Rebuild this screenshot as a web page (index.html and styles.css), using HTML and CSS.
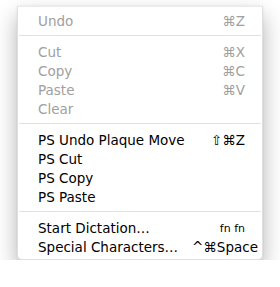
FILE: index.html
```html
<!DOCTYPE html>
<html lang="en">
<head>
  <meta charset="UTF-8">
  <title>Edit Menu</title>
  <link rel="stylesheet" href="styles.css">
</head>
<body>

  <!-- Edit menu -->
  <div class="menu">
    <div class="item disabled"><span>Undo</span><span class="key">⌘Z</span></div>
    <div class="sep"></div>
    <div class="item disabled"><span>Cut</span><span class="key">⌘X</span></div>
    <div class="item disabled"><span>Copy</span><span class="key">⌘C</span></div>
    <div class="item disabled"><span>Paste</span><span class="key">⌘V</span></div>
    <div class="item disabled"><span>Clear</span></div>
    <div class="sep"></div>
    <div class="item"><span>PS Undo Plaque Move</span><span class="key">⇧⌘Z</span></div>
    <div class="item"><span>PS Cut</span></div>
    <div class="item"><span>PS Copy</span></div>
    <div class="item"><span>PS Paste</span></div>
    <div class="sep"></div>
    <div class="item"><span>Start Dictation…</span><span class="key small">fn fn</span></div>
    <div class="item wide"><span>Special Characters…</span><span class="key">^⌘Space</span></div>
  </div>

</body>
</html>
```

FILE: styles.css
```css
* {
  margin: 0;
  padding: 0;
  box-sizing: border-box;
}

body {
  font-family: 'DejaVu Sans', sans-serif;
  background-color: #fff;
  color: #000;
}

.menu {
  width: 246px;
  margin: 6px 0 0 17px;
  padding: 4px 0 3px;
  background-color: #fff;
  border: 1px solid rgba(0, 0, 0, 0.12);
  border-top-color: rgba(0, 0, 0, 0.08);
  border-radius: 0 0 5px 5px;
  box-shadow: 0 10px 22px rgba(0, 0, 0, 0.3), 0 0 3px rgba(0, 0, 0, 0.08);
}

.item {
  display: flex;
  justify-content: space-between;
  align-items: center;
  height: 19px;
  padding: 2px 17px 0 20px;
  font-size: 13.5px;
  line-height: 19px;
}

.item.disabled {
  color: #a0a0a0;
}

.item.wide {
  padding-right: 4px;
}

.key {
  font-size: 13.5px;
}

.key.small {
  font-size: 11px;
}

.sep {
  height: 1px;
  margin: 5px 1px 6px;
  background-color: #e2e2e2;
}
```
